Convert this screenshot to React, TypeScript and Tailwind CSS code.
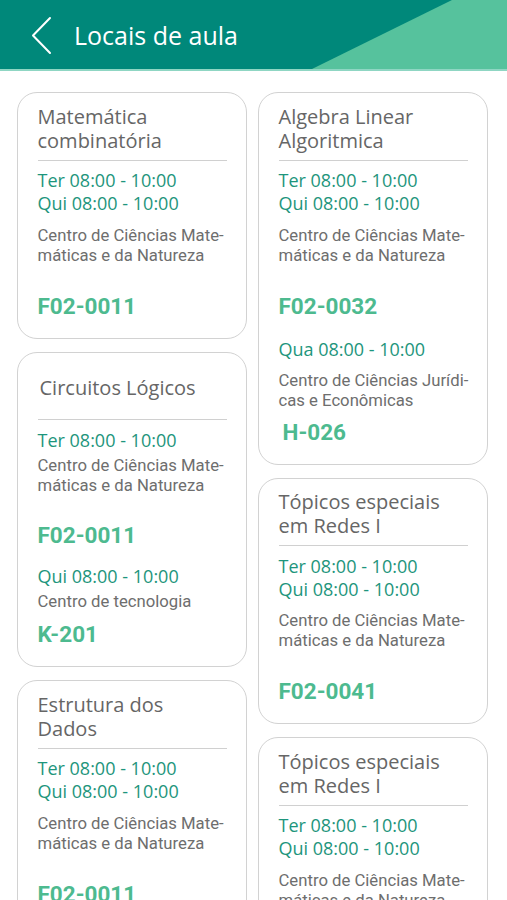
import React from "react";

type Section = {
  times: string[];
  loc: string[];
  room: string;
  tMt: string;
  lMt: string;
  rMt: string;
  rIndent?: boolean;
};

type CardData = {
  title: string[];
  titleIndent?: boolean;
  sections: Section[];
};

const natureza = ["Centro de Ciências Mate-", "máticas e da Natureza"];

const left: CardData[] = [
  {
    title: ["Matemática", "combinatória"],
    sections: [
      {
        times: ["Ter 08:00 - 10:00", "Qui 08:00 - 10:00"],
        loc: natureza,
        room: "F02-0011",
        tMt: "mt-[8.5px]",
        lMt: "mt-[10.5px]",
        rMt: "mt-[26px]",
      },
    ],
  },
  {
    title: ["Circuitos Lógicos"],
    titleIndent: true,
    sections: [
      {
        times: ["Ter 08:00 - 10:00"],
        loc: natureza,
        room: "F02-0011",
        tMt: "mt-[8.5px]",
        lMt: "mt-[4.5px]",
        rMt: "mt-[25px]",
      },
      {
        times: ["Qui 08:00 - 10:00"],
        loc: ["Centro de tecnologia"],
        room: "K-201",
        tMt: "mt-[15.5px]",
        lMt: "mt-[4.5px]",
        rMt: "mt-[8px]",
      },
    ],
  },
  {
    title: ["Estrutura dos", "Dados"],
    sections: [
      {
        times: ["Ter 08:00 - 10:00", "Qui 08:00 - 10:00"],
        loc: natureza,
        room: "F02-0011",
        tMt: "mt-[8.5px]",
        lMt: "mt-[10.5px]",
        rMt: "mt-[26px]",
      },
    ],
  },
];

const right: CardData[] = [
  {
    title: ["Algebra Linear", "Algoritmica"],
    sections: [
      {
        times: ["Ter 08:00 - 10:00", "Qui 08:00 - 10:00"],
        loc: natureza,
        room: "F02-0032",
        tMt: "mt-[8.5px]",
        lMt: "mt-[10.5px]",
        rMt: "mt-[26px]",
      },
      {
        times: ["Qua 08:00 - 10:00"],
        loc: ["Centro de Ciências Jurídi-", "cas e Econômicas"],
        room: "H-026",
        tMt: "mt-[18.5px]",
        lMt: "mt-[9.5px]",
        rMt: "mt-[7px]",
        rIndent: true,
      },
    ],
  },
  {
    title: ["Tópicos especiais", "em Redes I"],
    sections: [
      {
        times: ["Ter 08:00 - 10:00", "Qui 08:00 - 10:00"],
        loc: natureza,
        room: "F02-0041",
        tMt: "mt-[8.5px]",
        lMt: "mt-[10.5px]",
        rMt: "mt-[26px]",
      },
    ],
  },
  {
    title: ["Tópicos especiais", "em Redes I"],
    sections: [
      {
        times: ["Ter 08:00 - 10:00", "Qui 08:00 - 10:00"],
        loc: natureza,
        room: "F02-0041",
        tMt: "mt-[8.5px]",
        lMt: "mt-[10.5px]",
        rMt: "mt-[26px]",
      },
    ],
  },
];

function Card({ data }: { data: CardData }) {
  return (
    <div className="w-[230px] shrink-0 rounded-[20px] border-[1.5px] border-[#d2d2d2] bg-white pl-[19.5px] pr-[19.5px] pt-[11.5px] pb-[18px]">
      <div className="flex h-[48px] flex-col justify-center">
        {data.title.map((t) => (
          <div
            key={t}
            className={`font-['Open_Sans',sans-serif] text-[20px] leading-[24px] text-[#666666] whitespace-nowrap ${
              data.titleIndent ? "pl-[2px]" : ""
            }`}
          >
            {t}
          </div>
        ))}
      </div>
      <div className="mt-[7px] h-px bg-[#d0d0d0]" />
      {data.sections.map((s, i) => (
        <div key={i}>
          <div className={s.tMt}>
            {s.times.map((t) => (
              <div
                key={t}
                className="font-['Open_Sans',sans-serif] text-[18px] leading-[23px] text-[#1e957c] whitespace-nowrap"
              >
                {t}
              </div>
            ))}
          </div>
          <div className={s.lMt}>
            {s.loc.map((l) => (
              <div
                key={l}
                className="font-['Roboto',sans-serif] text-[16.7px] leading-[20px] text-[#6e6e6e] whitespace-nowrap"
              >
                {l}
              </div>
            ))}
          </div>
          <div
            className={`${s.rMt} font-['Roboto',sans-serif] text-[22.5px] font-bold leading-[28px] text-[#4dba8f] whitespace-nowrap ${
              s.rIndent ? "pl-[4px]" : ""
            }`}
          >
            {s.room}
          </div>
        </div>
      ))}
    </div>
  );
}

export default function App() {
  return (
    <div className="h-[900px] w-[507px] overflow-hidden bg-white">
      <div className="relative h-[69px] bg-[#00887a]">
        <svg
          className="absolute inset-0"
          width="507"
          height="69"
          viewBox="0 0 507 69"
        >
          <polygon points="452,0 507,0 507,69 312,69" fill="#56c29d" />
        </svg>
        <div className="relative flex h-full items-center pl-[31px]">
          <svg width="22" height="40" viewBox="0 0 22 40" className="mt-[2px]">
            <polyline
              points="19,2 2,19.5 19,37"
              fill="none"
              stroke="#ffffff"
              strokeWidth="2"
              strokeLinecap="round"
              strokeLinejoin="round"
            />
          </svg>
          <span className="ml-[21px] font-['Open_Sans',sans-serif] text-[25px] leading-[30px] text-white">
            Locais de aula
          </span>
        </div>
      </div>
      <div className="h-[2px] bg-[#8fd6c3]" />
      <div className="flex gap-[11px] pl-[17px] pt-[21px]">
        <div className="flex flex-col gap-[13px]">
          {left.map((c, i) => (
            <Card key={i} data={c} />
          ))}
        </div>
        <div className="flex flex-col gap-[13px]">
          {right.map((c, i) => (
            <Card key={i} data={c} />
          ))}
        </div>
      </div>
    </div>
  );
}
